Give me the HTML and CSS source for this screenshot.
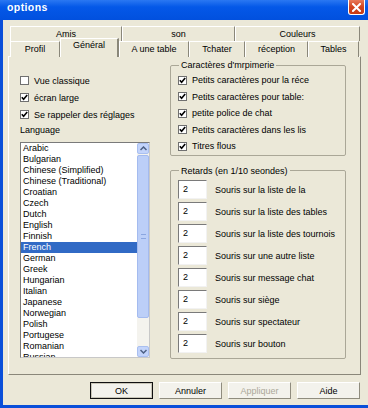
FILE: index.html
```html
<!DOCTYPE html>
<html lang="fr">
<head>
  <meta charset="UTF-8" />
  <title>options</title>
  <link rel="stylesheet" href="styles.css">
</head>
<body>

<div class="window">
  <div class="titlebar">
    <span class="title">options</span>
    <span class="close">
      <svg width="9" height="9" viewBox="0 0 9 9"><path d="M1 1 L8 8 M8 1 L1 8" stroke="#fff" stroke-width="2" stroke-linecap="square"/></svg>
    </span>
  </div>

  <div class="client">
    <div class="tabs">
      <div class="tab-row back">
        <div class="tab">Amis</div>
        <div class="tab">son</div>
        <div class="tab">Couleurs</div>
      </div>
      <div class="tab-row front">
        <div class="tab">Profil</div>
        <div class="tab active">Général</div>
        <div class="tab">A une table</div>
        <div class="tab">Tchater</div>
        <div class="tab">réception</div>
        <div class="tab">Tables</div>
      </div>
    </div>

    <div class="panel">
      <!-- left column -->
      <div class="col-left">
        <div class="check"><span class="box"></span>Vue classique</div>
        <div class="check"><span class="box"><svg width="7" height="7" viewBox="0 0 7 7"><path d="M0.8 3.2 L2.6 5.2 L6.2 1" fill="none" stroke="#000" stroke-width="1.6"/></svg></span>écran large</div>
        <div class="check"><span class="box"><svg width="7" height="7" viewBox="0 0 7 7"><path d="M0.8 3.2 L2.6 5.2 L6.2 1" fill="none" stroke="#000" stroke-width="1.6"/></svg></span>Se rappeler des réglages</div>
        <div class="lang-label">Language</div>
        <div class="listbox">
          <ul class="items">
            <li>Arabic</li>
            <li>Bulgarian</li>
            <li>Chinese (Simplified)</li>
            <li>Chinese (Traditional)</li>
            <li>Croatian</li>
            <li>Czech</li>
            <li>Dutch</li>
            <li>English</li>
            <li>Finnish</li>
            <li class="selected">French</li>
            <li>German</li>
            <li>Greek</li>
            <li>Hungarian</li>
            <li>Italian</li>
            <li>Japanese</li>
            <li>Norwegian</li>
            <li>Polish</li>
            <li>Portugese</li>
            <li>Romanian</li>
            <li>Russian</li>
          </ul>
          <div class="scrollbar">
            <div class="sb-btn"><svg width="7" height="5" viewBox="0 0 7 5"><path d="M0.5 4 L3.5 1 L6.5 4" fill="none" stroke="#4d6185" stroke-width="1.5"/></svg></div>
            <div class="sb-thumb"><span class="grip"></span></div>
            <div class="sb-track"></div>
            <div class="sb-btn"><svg width="7" height="5" viewBox="0 0 7 5"><path d="M0.5 1 L3.5 4 L6.5 1" fill="none" stroke="#4d6185" stroke-width="1.5"/></svg></div>
          </div>
        </div>
      </div>

      <!-- right column -->
      <div class="col-right">
        <fieldset class="group fonts">
          <legend>Caractères d'mrpimerie</legend>
          <div class="check"><span class="box"><svg width="7" height="7" viewBox="0 0 7 7"><path d="M0.8 3.2 L2.6 5.2 L6.2 1" fill="none" stroke="#000" stroke-width="1.6"/></svg></span>Petits caractères pour la réce</div>
          <div class="check"><span class="box"><svg width="7" height="7" viewBox="0 0 7 7"><path d="M0.8 3.2 L2.6 5.2 L6.2 1" fill="none" stroke="#000" stroke-width="1.6"/></svg></span>Petits caractères pour table:</div>
          <div class="check"><span class="box"><svg width="7" height="7" viewBox="0 0 7 7"><path d="M0.8 3.2 L2.6 5.2 L6.2 1" fill="none" stroke="#000" stroke-width="1.6"/></svg></span>petite police de chat</div>
          <div class="check"><span class="box"><svg width="7" height="7" viewBox="0 0 7 7"><path d="M0.8 3.2 L2.6 5.2 L6.2 1" fill="none" stroke="#000" stroke-width="1.6"/></svg></span>Petits caractères dans les lis</div>
          <div class="check"><span class="box"><svg width="7" height="7" viewBox="0 0 7 7"><path d="M0.8 3.2 L2.6 5.2 L6.2 1" fill="none" stroke="#000" stroke-width="1.6"/></svg></span>Titres flous</div>
        </fieldset>

        <fieldset class="group delays">
          <legend>Retards (en 1/10 seondes)</legend>
          <div class="delay"><span class="field">2</span>Souris sur la liste de la</div>
          <div class="delay"><span class="field">2</span>Souris sur la liste des tables</div>
          <div class="delay"><span class="field">2</span>Souris sur la liste des tournois</div>
          <div class="delay"><span class="field">2</span>Souris sur une autre liste</div>
          <div class="delay"><span class="field">2</span>Souris sur message chat</div>
          <div class="delay"><span class="field">2</span>Souris sur siège</div>
          <div class="delay"><span class="field">2</span>Souris sur spectateur</div>
          <div class="delay"><span class="field">2</span>Souris sur bouton</div>
        </fieldset>
      </div>
    </div>

    <div class="buttons">
      <button type="button" class="btn default">OK</button>
      <button type="button" class="btn">Annuler</button>
      <button type="button" class="btn" disabled>Appliquer</button>
      <button type="button" class="btn">Aide</button>
    </div>
  </div>
</div>

</body>
</html>
```

FILE: styles.css
```css
* {
  box-sizing: border-box;
}
body {
  margin: 0;
  width: 368px;
  height: 408px;
  overflow: hidden;
  font-family: "Liberation Sans", Arial, sans-serif;
  font-size: 9px;
  color: #000;
  background: #0a4fd9;
}
.window {
  width: 368px;
  height: 408px;
  display: flex;
  flex-direction: column;
}
.titlebar {
  height: 20px;
  display: flex;
  justify-content: space-between;
  align-items: flex-start;
  padding: 0 3px 0 7px;
  background: linear-gradient(#2a78f2, #0458e8 35%, #0150de);
}
.title {
  color: #fff;
  font-weight: bold;
  font-size: 10.5px;
  letter-spacing: 0.4px;
  line-height: 12px;
  margin-top: 1px;
}
.close {
  width: 17px;
  height: 15px;
  display: flex;
  align-items: center;
  justify-content: center;
  background: linear-gradient(#e87a5a, #d4441e 50%, #c83c16);
  border: 1px solid #fff;
  border-top: none;
  border-radius: 0 0 3px 3px;
}
.client {
  flex: 1;
  margin: 0 0 3px 3px;
  background: #ebe8d8;
}

/* tabs */
.tabs {
  margin: 6px 0 0 7px;
}
.tab-row {
  display: grid;
  height: 15px;
}
.tab-row.back {
  grid-template-columns: 112px 113px 125px;
}
.tab-row.front {
  grid-template-columns: 50px 59px 70px 56px 63px 51px;
}
.tab {
  text-align: center;
  line-height: 14px;
  background: #ebe8d8;
  border-top: 1px solid #fff;
  border-left: 1px solid #fff;
  border-right: 1px solid #8a877a;
  white-space: nowrap;
}
.tab.active {
  position: relative;
  z-index: 1;
  height: 19px;
  margin-top: -3px;
  line-height: 13px;
  border-right-width: 2px;
}

/* panel */
.panel {
  margin-left: 5px;
  width: 353px;
  height: 319px;
  display: flex;
  gap: 20px;
  padding-left: 11px;
  border: 1px solid;
  border-color: #fff #8a877a #8a877a #fff;
}
.col-left {
  width: 130px;
  padding-top: 15px;
}
.col-right {
  width: 176px;
  padding-top: 3px;
}
.check {
  display: flex;
  align-items: center;
  gap: 5px;
  height: 17px;
  white-space: nowrap;
}
.box {
  width: 9px;
  height: 9px;
  flex: none;
  display: flex;
  align-items: center;
  justify-content: center;
  background: #fff;
  border: 1px solid #707070;
}
.lang-label {
  height: 14px;
  line-height: 14px;
  margin-bottom: 5px;
}
.listbox {
  height: 216px;
  display: flex;
  background: #fff;
  border: 1px solid #7a7a7a;
  border-right-color: #c8c8c8;
  border-bottom-color: #c8c8c8;
}
.items {
  flex: 1;
  list-style: none;
  margin: 0;
  padding: 0;
  overflow: hidden;
}
.items li {
  height: 11px;
  line-height: 11px;
  padding-left: 2px;
  white-space: nowrap;
}
.items li.selected {
  background: #316ac5;
  color: #fff;
}
.scrollbar {
  width: 12px;
  display: flex;
  flex-direction: column;
  background: #f4f3ee;
}
.sb-btn {
  height: 11px;
  display: flex;
  align-items: center;
  justify-content: center;
  background: #c3d4fb;
  border: 1px solid #a9bff0;
  border-radius: 2px;
}
.sb-thumb {
  height: 163px;
  margin-top: 1px;
  display: flex;
  align-items: center;
  justify-content: center;
  background: #bccff8;
  border: 1px solid #a4bbef;
  border-radius: 2px;
}
.grip {
  width: 5px;
  height: 5px;
  border-top: 1px solid #8ba6e0;
  border-bottom: 1px solid #8ba6e0;
}
.sb-track {
  flex: 1;
}

/* group boxes */
.group {
  margin: 0;
  padding: 2px 0 0 7px;
  border: 1px solid #aaa797;
  border-radius: 2px;
}
.group legend {
  margin-left: 1px;
  padding: 0 2px;
  line-height: 10px;
}
.check + .check {
  margin-top: 0;
}
.fonts .check {
  height: 16.5px;
}
.delays {
  margin-top: 10px;
  padding-top: 3px;
  padding-bottom: 3px;
}
.delay {
  display: flex;
  align-items: center;
  gap: 8px;
  height: 22px;
  white-space: nowrap;
}
.field {
  width: 29px;
  height: 19px;
  padding: 3px 0 0 4px;
  line-height: 10px;
  background: #fff;
  border: 1px solid;
  border-color: #7a7a7a #f2f2f2 #f2f2f2 #7a7a7a;
}

/* bottom buttons */
.buttons {
  display: flex;
  justify-content: flex-end;
  gap: 6px;
  padding-right: 8px;
  margin-top: 7px;
}
.btn {
  width: 63px;
  height: 17px;
  padding: 0;
  font-family: inherit;
  font-size: 9px;
  color: #000;
  background: #f3f2ec;
  border: 1px solid;
  border-color: #fff #8f8c7e #8f8c7e #fff;
}
.btn.default {
  border-color: #111;
  box-shadow: inset 0 0 0 1px #c9c6b8;
}
.btn:disabled {
  color: #aca899;
}
```
